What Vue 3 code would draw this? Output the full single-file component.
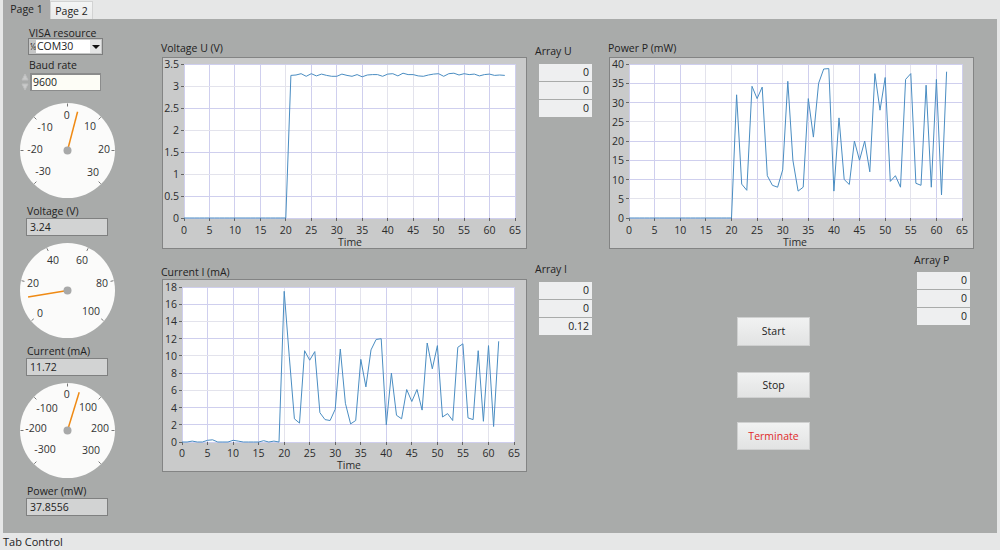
<script setup>
const zeros = n => Array(n).fill(0)

const voltage = [...zeros(21), 3.24, 3.25, 3.28, 3.22, 3.28, 3.23, 3.27, 3.24, 3.22, 3.22, 3.27, 3.24, 3.22, 3.26, 3.21, 3.25, 3.26, 3.26, 3.22, 3.27, 3.28, 3.23, 3.29, 3.26, 3.26, 3.23, 3.22, 3.25, 3.27, 3.28, 3.22, 3.28, 3.29, 3.25, 3.28, 3.26, 3.27, 3.23, 3.26, 3.27, 3.24, 3.25, 3.24]
const current = [0, 0, 0.1, 0, 0, 0.2, 0.25, 0, 0, 0, 0.2, 0.1, 0, 0, 0, 0, 0.15, 0, 0.1, 0, 17.5, 9.9, 2.7, 2.2, 10.6, 9.5, 10.5, 3.4, 2.6, 2.5, 3.8, 10.8, 4.5, 2.1, 2.5, 9.6, 6.4, 10.7, 11.9, 12, 2, 8, 3.1, 2.7, 6.1, 4.7, 6.1, 3.7, 11.5, 8.5, 11.2, 2.9, 3.3, 2.5, 11, 11.4, 2.8, 2.6, 10.6, 2.4, 11.2, 1.8, 11.7]
const power = [...zeros(21), 32, 8.8, 7.2, 34.2, 31, 34, 11, 8.5, 8, 12.5, 35.5, 15, 7, 8, 31, 21, 35, 38.7, 38.8, 7, 26, 10, 8.7, 20, 15, 20, 12, 37.5, 28, 36.5, 9.5, 11, 8, 36, 37.5, 9, 8.5, 34.5, 8, 36, 6, 38]

function makeChart(c) {
  const sx = v => c.x0 + (v / 65) * (c.x1 - c.x0)
  const sy = v => c.y1 - (v / c.ymax) * (c.y1 - c.y0)
  return {
    ...c,
    xt: Array.from({ length: 14 }, (_, i) => ({ label: String(i * 5), x: sx(i * 5), soft: c.softX.includes(i * 5) })),
    yt: c.yticks.map(v => ({ label: String(v), y: sy(v), soft: c.softY.includes(v) })),
    line: c.data.map((v, i) => `${sx(i).toFixed(1)},${sy(v).toFixed(1)}`).join(' ')
  }
}

const voltageChart = makeChart({ title: 'Voltage U (V)', x0: 21, x1: 352, y0: 6, y1: 160, xl: 172, tx: 187, ty: 184, ymax: 3.5, yticks: [0, 0.5, 1, 1.5, 2, 2.5, 3, 3.5], softX: [20, 40, 45], softY: [1, 2, 3], data: voltage })
const currentChart = makeChart({ title: 'Current I (mA)', x0: 19, x1: 351, y0: 7, y1: 162, xl: 173, tx: 186, ty: 185, ymax: 18, yticks: [0, 2, 4, 6, 8, 10, 12, 14, 16, 18], softX: [20, 35, 45, 60], softY: [6, 10, 14], data: current })
const powerChart = makeChart({ title: 'Power P (mW)', x0: 19, x1: 352, y0: 6, y1: 160, xl: 172, tx: 185, ty: 184, ymax: 40, yticks: [0, 5, 10, 15, 20, 25, 30, 35, 40], softX: [15, 20, 30, 40, 55], softY: [5, 25], data: power })
const middleCharts = [voltageChart, currentChart]

function makeGauge(g) {
  const r = d => (d * Math.PI) / 180
  return {
    ...g,
    ticks: g.angles.map(a => ({
      x1: 47.5 + 47 * Math.sin(r(a)), y1: 47.5 - 47 * Math.cos(r(a)),
      x2: 47.5 + 44 * Math.sin(r(a)), y2: 47.5 - 44 * Math.cos(r(a))
    })),
    nx: 47.5 + 40 * Math.sin(r(g.needle)),
    ny: 47.5 - 40 * Math.cos(r(g.needle))
  }
}
const wide = [-135, -90, -45, 0, 45, 90, 135]
const gaugeV = makeGauge({ angles: wide, needle: 14.6, labels: [['0', 46.7, 12], ['10', 70, 23], ['20', 84, 46], ['30', 73, 69], ['-10', 25, 24], ['-20', 15, 46], ['-30', 23, 68]] })
const gaugeI = makeGauge({ angles: [-130, -78, -26, 26, 78, 130], needle: -99.5, labels: [['20', 13, 40], ['40', 33, 17], ['60', 62, 17], ['80', 82, 40], ['100', 71, 68], ['0', 20, 70]] })
const gaugeP = makeGauge({ angles: wide, needle: 17, labels: [['0', 46.7, 11], ['100', 68, 24], ['200', 80, 45], ['300', 71, 67], ['-100', 27, 25], ['-200', 16, 45], ['-300', 25, 66]] })

const readouts = [
  { gauge: gaugeV, label: 'Voltage (V)', value: '3.24' },
  { gauge: gaugeI, label: 'Current (mA)', value: '11.72' },
  { gauge: gaugeP, label: 'Power (mW)', value: '37.8556' }
]
</script>

<template>
  <div class="window">
    <div class="tabs">
      <div class="tab active">Page 1</div>
      <div class="tab">Page 2</div>
    </div>
    <div class="panel">
      <div class="left">
        <div class="lab visa-lab">VISA resource</div>
        <div class="ring">
          <span class="ring-icon">⅙</span>
          <span class="ring-text">COM30</span>
          <span class="ring-btn"><i class="caret"></i></span>
        </div>
        <div class="lab baud-lab">Baud rate</div>
        <div class="baud">
          <svg class="spin" width="8" height="20" viewBox="0 0 8 20">
            <path d="M1 8 L4 2 L7 8 Z" fill="#c9caca" stroke="#bdbebe" />
            <path d="M1 12 L4 18 L7 12 Z" fill="#c9caca" stroke="#bdbebe" />
          </svg>
          <div class="baud-input">9600</div>
        </div>
        <template v-for="r in readouts" :key="r.label">
          <svg class="gauge" width="95" height="95" viewBox="0 0 95 95">
            <circle cx="47.5" cy="47.5" r="47.5" fill="#fbfbfa" />
            <line v-for="(t, i) in r.gauge.ticks" :key="i" :x1="t.x1" :y1="t.y1" :x2="t.x2" :y2="t.y2" stroke="#777" stroke-width="1" />
            <text v-for="l in r.gauge.labels" :key="l[0]" class="glabel" :x="l[1]" :y="l[2]" text-anchor="middle" dominant-baseline="central">{{ l[0] }}</text>
            <line x1="47.5" y1="47.5" :x2="r.gauge.nx" :y2="r.gauge.ny" stroke="#ef8a14" stroke-width="1.5" />
            <circle cx="47.5" cy="47.5" r="4" fill="#a8a9a9" />
          </svg>
          <div class="lab read-lab">{{ r.label }}</div>
          <div class="read-box">{{ r.value }}</div>
        </template>
      </div>

      <div class="charts">
        <div v-for="c in middleCharts" :key="c.title" class="chart-block">
          <div class="chart-title">{{ c.title }}</div>
          <div class="frame">
            <svg width="363" height="190" viewBox="0 0 363 190">
              <rect :x="c.x0" :y="c.y0" :width="c.x1 - c.x0" :height="c.y1 - c.y0" fill="#fff" />
              <line v-for="t in c.xt" :key="t.label" :x1="t.x" :x2="t.x" :y1="c.y0" :y2="c.y1" :class="t.soft ? 'grid soft' : 'grid'" />
              <line v-for="t in c.yt" :key="t.label" :x1="c.x0" :x2="c.x1" :y1="t.y" :y2="t.y" :class="t.soft ? 'grid soft' : 'grid'" />
              <line v-for="t in c.xt" :key="'x' + t.label" :x1="t.x" :x2="t.x" :y1="c.y1" :y2="c.y1 + 3" class="tick" />
              <line v-for="t in c.yt" :key="'y' + t.label" :x1="c.x0 - 3" :x2="c.x0" :y1="t.y" :y2="t.y" class="tick" />
              <text v-for="t in c.xt" :key="'xl' + t.label" class="axis" :x="t.x" :y="c.xl" text-anchor="middle" dominant-baseline="central">{{ t.label }}</text>
              <text v-for="t in c.yt" :key="'yl' + t.label" class="axis" :x="c.x0 - 5" :y="t.y" text-anchor="end" dominant-baseline="central">{{ t.label }}</text>
              <text class="axis" :x="c.tx" :y="c.ty" text-anchor="middle" dominant-baseline="central">Time</text>
              <polyline :points="c.line" class="plot" />
            </svg>
          </div>
        </div>
      </div>

      <div class="arrays">
        <div class="array array-u">
          <div class="lab arr-lab">Array U</div>
          <div class="cells"><div class="cell">0</div><div class="cell">0</div><div class="cell">0</div></div>
        </div>
        <div class="array array-i">
          <div class="lab arr-lab">Array I</div>
          <div class="cells"><div class="cell">0</div><div class="cell">0</div><div class="cell">0.12</div></div>
        </div>
      </div>

      <div class="right">
        <div class="chart-title power-title">{{ powerChart.title }}</div>
        <div class="frame power-frame">
          <svg width="363" height="190" viewBox="0 0 363 190">
            <rect :x="powerChart.x0" :y="powerChart.y0" :width="powerChart.x1 - powerChart.x0" :height="powerChart.y1 - powerChart.y0" fill="#fff" />
            <line v-for="t in powerChart.xt" :key="t.label" :x1="t.x" :x2="t.x" :y1="powerChart.y0" :y2="powerChart.y1" :class="t.soft ? 'grid soft' : 'grid'" />
            <line v-for="t in powerChart.yt" :key="t.label" :x1="powerChart.x0" :x2="powerChart.x1" :y1="t.y" :y2="t.y" :class="t.soft ? 'grid soft' : 'grid'" />
            <line v-for="t in powerChart.xt" :key="'x' + t.label" :x1="t.x" :x2="t.x" :y1="powerChart.y1" :y2="powerChart.y1 + 3" class="tick" />
            <line v-for="t in powerChart.yt" :key="'y' + t.label" :x1="powerChart.x0 - 3" :x2="powerChart.x0" :y1="t.y" :y2="t.y" class="tick" />
            <text v-for="t in powerChart.xt" :key="'xl' + t.label" class="axis" :x="t.x" :y="powerChart.xl" text-anchor="middle" dominant-baseline="central">{{ t.label }}</text>
            <text v-for="t in powerChart.yt" :key="'yl' + t.label" class="axis" :x="powerChart.x0 - 5" :y="t.y" text-anchor="end" dominant-baseline="central">{{ t.label }}</text>
            <text class="axis" :x="powerChart.tx" :y="powerChart.ty" text-anchor="middle" dominant-baseline="central">Time</text>
            <polyline :points="powerChart.line" class="plot" />
          </svg>
        </div>
        <div class="controls">
          <div class="buttons">
            <div class="btn btn-start">Start</div>
            <div class="btn btn-stop">Stop</div>
            <div class="btn btn-term">Terminate</div>
          </div>
          <div class="array array-p">
            <div class="lab arr-lab">Array P</div>
            <div class="cells"><div class="cell">0</div><div class="cell">0</div><div class="cell">0</div></div>
          </div>
        </div>
      </div>
    </div>
    <div class="status">Tab Control</div>
  </div>
</template>

<style>
html, body { margin: 0; overflow: hidden; }
</style>

<style scoped>
.window {
  width: 1000px; height: 550px; background: #e6e7e7; color: #222;
  font-family: "Open Sans", "Noto Sans", sans-serif; font-size: 10.5px;
  display: flex; flex-direction: column; overflow: hidden;
}
.tabs { height: 19px; display: flex; padding-left: 3px; box-sizing: border-box; }
.tab {
  width: 43px; margin-top: 1px; line-height: 18px; text-align: center; box-sizing: border-box;
  background: linear-gradient(#f4f5f5, #e9eaea); border: 1px solid #d2d3d3; border-bottom: 0;
}
.tab.active { width: 47px; margin-top: 0; line-height: 18px; background: #a9aaaa; border: 0; }
.panel {
  width: 994px; height: 514px; margin-left: 3px; background: #a9abaa;
  display: flex; align-items: flex-start; box-sizing: border-box; padding-left: 17px;
}
.status { height: 17px; line-height: 17px; padding-left: 3px; font-size: 11px; }

.lab { line-height: 10px; height: 10px; white-space: nowrap; }
.left { width: 142px; flex: none; margin-top: 9px; display: flex; flex-direction: column; align-items: flex-start; }
.visa-lab { margin-left: 9px; }
.ring {
  margin-left: 8px; width: 75px; height: 17px; box-sizing: border-box; display: flex;
  border: 1px solid #7d7e7e; background: #c5c6c6; padding: 1px;
}
.ring-icon { width: 6px; font-size: 8px; line-height: 13px; text-align: center; color: #333; }
.ring-text { flex: 1; background: #fff; line-height: 13px; padding-left: 1px; }
.ring-btn { width: 11px; display: flex; align-items: center; justify-content: center; background: #e4e5e5; }
.caret { width: 0; height: 0; border: 4px solid transparent; border-top: 4px solid #111; border-bottom: 0; }
.baud-lab { margin-left: 9px; margin-top: 5px; }
.baud { display: flex; align-items: center; margin-top: 2px; margin-left: 1px; height: 20px; }
.spin { flex: none; width: 8px; }
.baud-input {
  margin-left: 1px; width: 71px; height: 18px; box-sizing: border-box; background: #fdfdf6;
  border: 1px solid #8b8c8c; border-width: 2px 1px 1px 2px; padding-left: 1px; line-height: 15px;
}
.gauge { display: block; flex: none; margin-top: 11px; }
.glabel { font-size: 10.5px; fill: #333; }
.read-lab { margin-left: 7px; margin-top: 8px; }
.read-box {
  margin-left: 6px; margin-top: 2px; margin-bottom: -4px; width: 82px; height: 18px; box-sizing: border-box; background: #d2d3d3;
  border: 1px solid #7f8080; padding-left: 3px; line-height: 16px;
}
.charts { width: 365px; flex: none; margin-top: 22px; }
.chart-block + .chart-block { margin-top: 16px; }
.chart-title { line-height: 14px; height: 14px; margin-left: -1px; }
.chart-block:first-child .chart-title { margin-bottom: 2px; }
.chart-block:first-child .frame { height: 192px; }
.chart-block + .chart-block .frame { height: 193px; }
.frame { width: 365px; box-sizing: border-box; border: 1px solid #838484; background: #c9caca; }
.frame svg { display: block; overflow: visible; }
.grid { stroke: #cfcfee; stroke-width: 1; shape-rendering: crispEdges; }
.grid.soft { stroke: #e3e3ec; }
.tick { stroke: #666; stroke-width: 1; shape-rendering: crispEdges; }
.axis { font-size: 10.5px; fill: #2c2c2c; }
.plot { fill: none; stroke: #4a8dc2; stroke-width: 1; }

.arrays { width: 73px; flex: none; margin-top: 27px; margin-left: 8px; }
.arr-lab { line-height: 10px; margin-bottom: 8px; }
.cells { margin-left: 4px; width: 53px; }
.cell {
  height: 17px; line-height: 17px; background: #eeeff0; text-align: right; padding-right: 3px;
  box-sizing: border-box; margin-bottom: 1px;
}
.array-i { margin-top: 147px; }
.right { width: 366px; flex: none; margin-top: 22px; }
.power-title { margin-bottom: 2px; margin-left: 0; }
.power-frame { margin-left: 1px; height: 192px; }
.controls { display: flex; align-items: flex-start; }
.buttons { width: 177px; margin-left: 129px; margin-top: 68px; flex: none; display: flex; flex-direction: column; }
.btn {
  width: 73px; box-sizing: border-box; text-align: center; background: linear-gradient(#f1f2f2, #e2e3e3);
  border: 1px solid #cfd0d0;
}
.btn-start { height: 29px; line-height: 27px; }
.btn-stop { height: 26px; line-height: 24px; margin-top: 26px; }
.btn-term { height: 28px; line-height: 26px; margin-top: 24px; color: #e02a2a; }
.array-p { margin-top: 6px; }
.array-p .cells { margin-left: 3px; }
.array-p .arr-lab { margin-bottom: 7px; }
</style>
